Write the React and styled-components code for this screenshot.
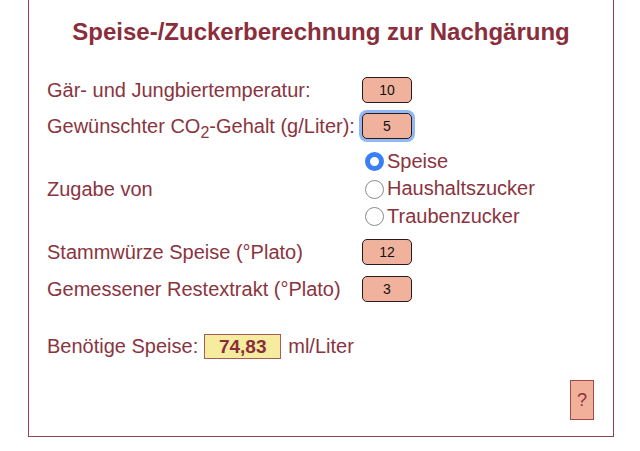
import { useState } from "react";
import styled, { createGlobalStyle } from "styled-components";

const GlobalStyle = createGlobalStyle`
    body {
        margin: 0;
        background: #ffffff;
        font-family: "Liberation Sans", Arial, sans-serif;
    }
`;

const Panel = styled.div`
    width: 586px;
    height: 437px;
    margin-left: 28px;
    box-sizing: border-box;
    border: 1px solid #8e4450;
    border-top: 0;
    padding: 18px 18px 0 18px;
    display: flex;
    flex-direction: column;
    color: #8a3440;
`;

const Title = styled.h1`
    margin: 0;
    font-size: 24px;
    font-weight: bold;
    text-align: center;
    color: #8a2e3c;
    line-height: 28px;
`;

const Form = styled.div`
    display: grid;
    grid-template-columns: 315px auto;
    grid-template-rows: 36px 36px 90px 36px 37px;
    align-items: center;
    margin-top: 26px;
`;

const Label = styled.div`
    font-size: 20px;
    line-height: 26px;
    white-space: nowrap;
`;

const Sub = styled.sub`
    font-size: 16px;
    line-height: 0;
    vertical-align: -5px;
`;

const NumberBox = styled.input`
    width: 50px;
    height: 26px;
    box-sizing: border-box;
    border: 1px solid #2b1a1a;
    border-radius: 5px;
    background: #f0b29c;
    font-family: inherit;
    font-size: 14px;
    color: #111;
    text-align: center;
    padding: 0;
    outline: none;
    box-shadow: ${({ $focused }) => ($focused ? "0 0 0 3px #8fb8f5" : "none")};
`;

const RadioGroup = styled.div`
    display: flex;
    flex-direction: column;
    margin-left: 3px;
`;

const RadioRow = styled.label`
    display: flex;
    align-items: center;
    gap: 3px;
    font-size: 20px;
    line-height: 27.5px;
`;

const Radio = styled.span`
    width: 19px;
    height: 19px;
    box-sizing: border-box;
    border-radius: 50%;
    background: #fff;
    border: ${({ $checked }) => ($checked ? "5px solid #3a7ff6" : "1.5px solid #8a8a8a")};
`;

const Result = styled.div`
    display: flex;
    align-items: center;
    gap: 6px;
    margin-top: 27px;
    font-size: 20px;
`;

const ResultBox = styled.div`
    width: 77px;
    height: 25px;
    box-sizing: border-box;
    border: 1px solid #a65a5a;
    background: #f6ec9e;
    font-weight: bold;
    font-size: 19px;
    line-height: 23px;
    text-align: center;
    color: #8a2e3c;
    margin-right: 1px;
`;

const Footer = styled.div`
    margin-top: auto;
    display: flex;
    justify-content: flex-end;
    padding: 0 0 16px 0;
    margin-right: 1px;
`;

const HelpButton = styled.button`
    width: 24px;
    height: 40px;
    box-sizing: border-box;
    border: 1px solid #a04a4a;
    background: #f0b09a;
    color: #8a3440;
    font-family: inherit;
    font-size: 18px;
    padding: 0;
`;

const sugars = ["Speise", "Haushaltszucker", "Traubenzucker"];

export default function App() {
    const [sugar, setSugar] = useState("Speise");
    return (
        <>
            <GlobalStyle />
            <Panel>
                <Title>Speise-/Zuckerberechnung zur Nachgärung</Title>
                <Form>
                    <Label>Gär- und Jungbiertemperatur:</Label>
                    <NumberBox defaultValue="10" />
                    <Label>
                        Gewünschter CO<Sub>2</Sub>-Gehalt (g/Liter):
                    </Label>
                    <NumberBox defaultValue="5" $focused />
                    <Label>Zugabe von</Label>
                    <RadioGroup>
                        {sugars.map((s) => (
                            <RadioRow key={s} onClick={() => setSugar(s)}>
                                <Radio $checked={sugar === s} />
                                {s}
                            </RadioRow>
                        ))}
                    </RadioGroup>
                    <Label>Stammwürze Speise (°Plato)</Label>
                    <NumberBox defaultValue="12" />
                    <Label>Gemessener Restextrakt (°Plato)</Label>
                    <NumberBox defaultValue="3" />
                </Form>
                <Result>
                    <span>Benötige Speise:</span>
                    <ResultBox>74,83</ResultBox>
                    <span>ml/Liter</span>
                </Result>
                <Footer>
                    <HelpButton>?</HelpButton>
                </Footer>
            </Panel>
        </>
    );
}
